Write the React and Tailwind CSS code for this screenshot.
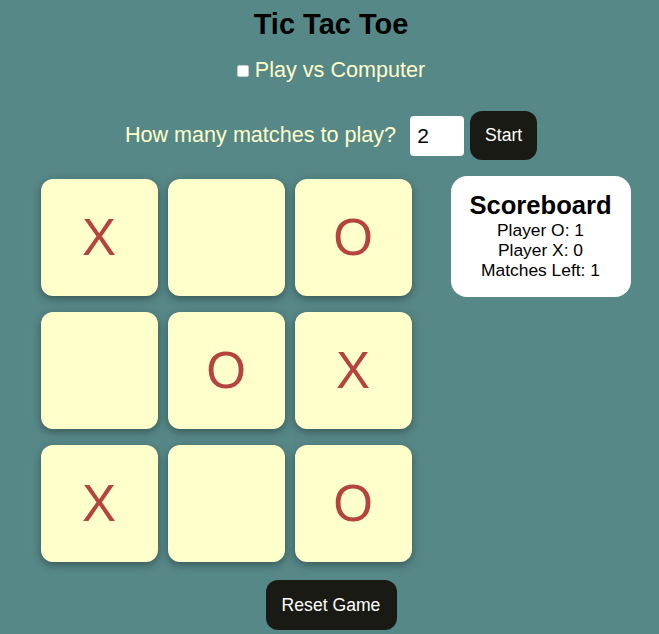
import { useState } from "react";

const INITIAL = ["X", "", "O", "", "O", "X", "X", "", "O"];

function Tile({ value, onClick }) {
  return (
    <button
      onClick={onClick}
      className="w-[117px] h-[117px] rounded-[12px] bg-[#ffffcc] shadow-[0_3px_8px_rgba(0,0,0,0.35)] flex items-center justify-center text-[51px] leading-none text-[#b4443d]"
    >
      {value}
    </button>
  );
}

export default function App() {
  const [board, setBoard] = useState(INITIAL);
  const [vsComputer, setVsComputer] = useState(false);
  const [matches, setMatches] = useState("2");

  const handleClick = (i) => {
    if (board[i]) return;
    const next = [...board];
    const filled = board.filter(Boolean).length;
    next[i] = filled % 2 === 0 ? "X" : "O";
    setBoard(next);
  };

  return (
    <div className="min-h-[634px] bg-[#568887] pl-[3px] flex flex-col items-center font-['Liberation_Sans',Arial,sans-serif]">
      {/* title */}
      <h1 className="mt-[8px] text-[29px] leading-[33px] font-bold text-black">Tic Tac Toe</h1>

      {/* mode toggle */}
      <label className="mt-[16px] flex items-center text-[21.6px] leading-[25px] text-[#ffffcc]">
        <input
          type="checkbox"
          checked={vsComputer}
          onChange={(e) => setVsComputer(e.target.checked)}
          className="w-[12px] h-[12px] mr-[6px] mt-[2px] appearance-none bg-white rounded-[2px] border border-[#c8c8c8]"
        />
        Play vs Computer
      </label>

      {/* matches */}
      <div className="mt-[29px] flex items-center">
        <span className="text-[21.6px] leading-[25px] text-[#ffffcc] mt-[-3px]">How many matches to play?</span>
        <input
          type="number"
          value={matches}
          onChange={(e) => setMatches(e.target.value)}
          className="ml-[14px] w-[54px] h-[40px] bg-white rounded-[4px] pl-[7px] text-[21px] text-black outline-none [appearance:textfield] [&::-webkit-inner-spin-button]:appearance-none"
        />
        <button className="ml-[6px] w-[67px] h-[49px] rounded-[12px] bg-[#1a1a14] text-white text-[17.6px]">
          Start
        </button>
      </div>

      {/* board + scoreboard */}
      <div className="mt-[16px] w-full flex justify-center items-start gap-[39px] pl-[9px]">
        <div className="mt-[3px] grid grid-cols-3 gap-x-[10px] gap-y-[16px]">
          {board.map((v, i) => (
            <Tile key={i} value={v} onClick={() => handleClick(i)} />
          ))}
        </div>
        <div className="w-[180px] h-[121px] bg-white rounded-[16px] pt-[15px] flex flex-col items-center text-black">
          <h2 className="text-[25.6px] leading-[29px] font-bold">Scoreboard</h2>
          <p className="text-[17.4px] leading-[20px]">Player O: 1</p>
          <p className="text-[17.4px] leading-[20px]">Player X: 0</p>
          <p className="text-[17.4px] leading-[20px]">Matches Left: 1</p>
        </div>
      </div>

      {/* reset */}
      <button
        onClick={() => setBoard(Array(9).fill(""))}
        className="mt-[18px] w-[131px] h-[50px] rounded-[12px] bg-[#1a1a14] text-white text-[17.6px]"
      >
        Reset Game
      </button>
    </div>
  );
}
